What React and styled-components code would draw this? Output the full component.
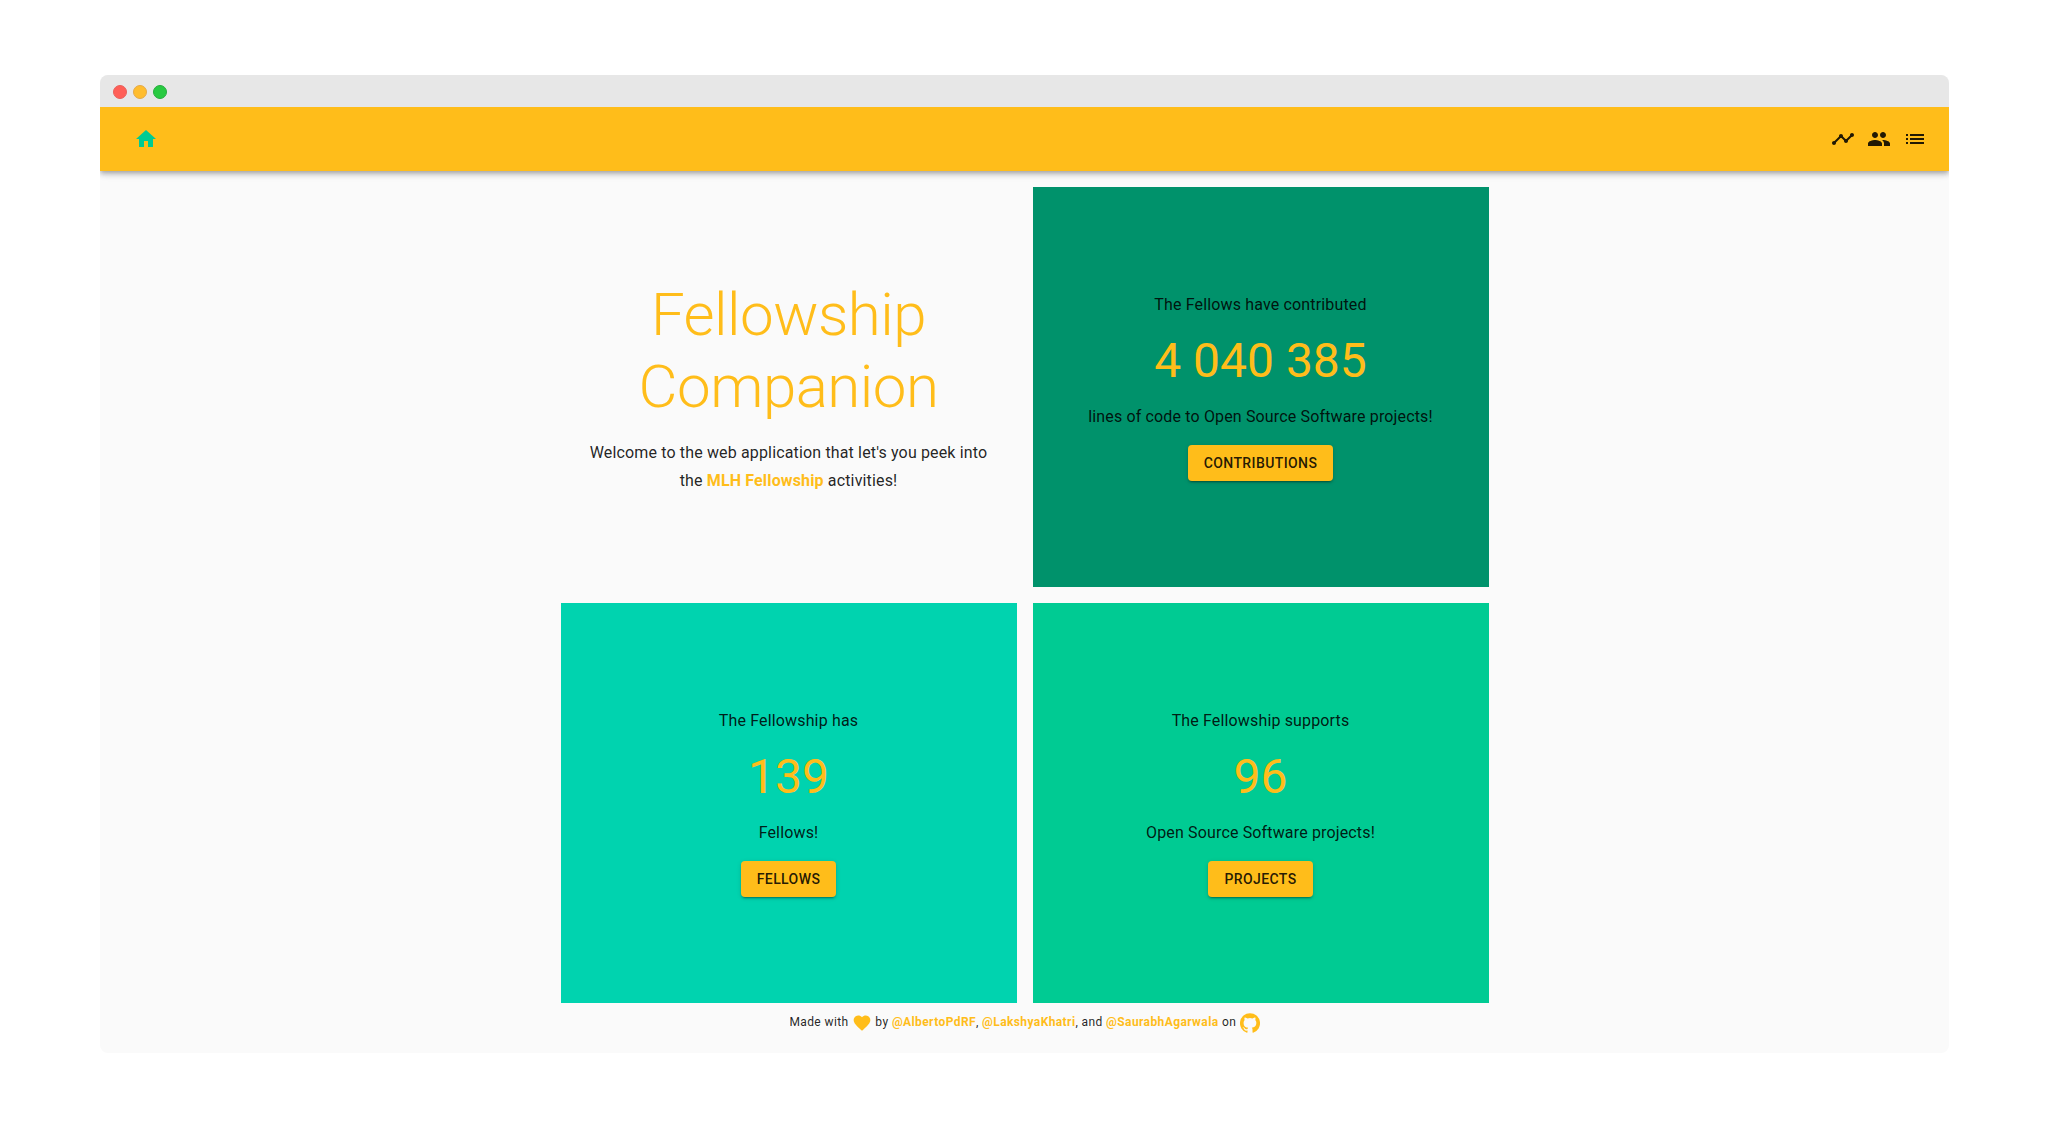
import React from "react";
import styled, { createGlobalStyle, ThemeProvider } from "styled-components";

const theme = {
  yellow: "#ffbd1a",
  green: "#00cb93",
  darkGreen: "#00926b",
  teal: "#00d3af",
  text: "rgba(0, 0, 0, 0.87)",
  surface: "#fafafa",
};

const GlobalStyle = createGlobalStyle`
  *, *::before, *::after {
    box-sizing: border-box;
  }
  body {
    margin: 0;
    background: #fff;
    color: ${theme.text};
    font-family: Roboto, "Liberation Sans", sans-serif;
  }
`;

const Page = styled.div`
  padding: 75px 100px;
`;

const BrowserWindow = styled.div`
  overflow: hidden;
  border-radius: 8px;
  background: ${({ theme }) => theme.surface};
`;

const TitleBar = styled.div`
  position: relative;
  z-index: 1;
  display: flex;
  align-items: center;
  gap: 6px;
  height: 32px;
  padding: 2px 13px 0;
  background: #e7e7e7;
`;

const WindowDot = styled.span`
  width: 14px;
  height: 14px;
  border: 1px solid ${({ $edge }) => $edge};
  border-radius: 50%;
  background: ${({ $fill }) => $fill};
`;

const AppBar = styled.header`
  display: flex;
  align-items: center;
  justify-content: space-between;
  height: 64px;
  padding: 0 16px 0 28px;
  background: ${({ theme }) => theme.yellow};
  box-shadow:
    0 2px 4px -1px rgba(0, 0, 0, 0.2),
    0 4px 5px 0 rgba(0, 0, 0, 0.14),
    0 1px 10px 0 rgba(0, 0, 0, 0.12);
`;

const Nav = styled.nav`
  display: flex;
`;

const NavLink = styled.a`
  display: flex;
  padding: 6px;
  color: ${({ $active, theme }) => ($active ? theme.green : theme.text)};
`;

const Icon = styled.svg.attrs({ viewBox: "0 0 24 24", "aria-hidden": true })`
  width: ${({ $size = 24 }) => $size}px;
  height: ${({ $size = 24 }) => $size}px;
  fill: currentColor;
`;

const Grid = styled.main`
  display: grid;
  grid-template-columns: repeat(2, minmax(0, 1fr));
  grid-auto-rows: 400px;
  gap: 16px;
  max-width: 960px;
  margin: 0 auto;
  padding: 16px 16px 0;
`;

const Panel = styled.section`
  display: flex;
  flex-direction: column;
  align-items: center;
  justify-content: center;
  gap: ${({ $gap = 14 }) => $gap}px;
  padding: ${({ $color }) => ($color ? "0 16px 2px" : "0 16px")};
  text-align: center;
  background: ${({ $color = "transparent" }) => $color};
`;

const Title = styled.h1`
  margin: 0;
  color: ${({ theme }) => theme.yellow};
  font-size: 60px;
  font-weight: 300;
  line-height: 72px;
  letter-spacing: -0.00833em;
`;

const Text = styled.p`
  margin: 0;
  font-size: 16px;
  line-height: 28px;
  letter-spacing: 0.00938em;
`;

const Count = styled.strong`
  color: ${({ theme }) => theme.yellow};
  font-size: 48px;
  font-weight: 400;
  line-height: 56px;
`;

const Button = styled.button`
  height: 36px;
  padding: 0 16px;
  border: 0;
  border-radius: 4px;
  background: ${({ theme }) => theme.yellow};
  color: ${({ theme }) => theme.text};
  font: 500 14px/24px Roboto, "Liberation Sans", sans-serif;
  letter-spacing: 0.02857em;
  text-transform: uppercase;
  cursor: pointer;
  box-shadow:
    0 3px 1px -2px rgba(0, 0, 0, 0.2),
    0 2px 2px 0 rgba(0, 0, 0, 0.14),
    0 1px 5px 0 rgba(0, 0, 0, 0.12);
`;

const Link = styled.a`
  color: ${({ theme }) => theme.yellow};
  font-weight: 700;
  text-decoration: none;
`;

const Footer = styled.footer`
  height: 50px;
  padding-top: 9px;
  text-align: center;
  font-size: 12px;
  line-height: 20px;
  letter-spacing: 0.03333em;

  svg {
    color: ${({ theme }) => theme.yellow};
    vertical-align: middle;
  }
`;

const paths = {
  home: "M10 20v-6h4v6h5v-8h3L12 3 2 12h3v8z",
  timeline:
    "M23 8c0 1.1-.9 2-2 2-.18 0-.35-.02-.51-.07l-3.56 3.55c.05.16.07.34.07.52 0 1.1-.9 2-2 2s-2-.9-2-2c0-.18.02-.36.07-.52l-2.55-2.55c-.16.05-.34.07-.52.07s-.36-.02-.52-.07l-4.55 4.56c.05.16.07.33.07.51 0 1.1-.9 2-2 2s-2-.9-2-2 .9-2 2-2c.18 0 .35.02.51.07l4.56-4.55C8.02 9.36 8 9.18 8 9c0-1.1.9-2 2-2s2 .9 2 2c0 .18-.02.36-.07.52l2.55 2.55c.16-.05.34-.07.52-.07s.36.02.52.07l3.55-3.56C19.02 8.35 19 8.18 19 8c0-1.1.9-2 2-2s2 .9 2 2z",
  people:
    "M16 11c1.66 0 2.99-1.34 2.99-3S17.66 5 16 5c-1.66 0-3 1.34-3 3s1.34 3 3 3zm-8 0c1.66 0 2.99-1.34 2.99-3S9.66 5 8 5C6.34 5 5 6.34 5 8s1.34 3 3 3zm0 2c-2.33 0-7 1.17-7 3.5V19h14v-2.5c0-2.33-4.67-3.5-7-3.5zm8 0c-.29 0-.62.02-.97.05 1.16.84 1.97 1.97 1.97 3.45V19h6v-2.5c0-2.33-4.67-3.5-7-3.5z",
  list: "M3 13h2v-2H3v2zm0 4h2v-2H3v2zm0-8h2V7H3v2zm4 4h14v-2H7v2zm0 4h14v-2H7v2zM7 7v2h14V7H7z",
  heart:
    "M12 21.35l-1.45-1.32C5.4 15.36 2 12.28 2 8.5 2 5.42 4.42 3 7.5 3c1.74 0 3.41.81 4.5 2.09C13.09 3.81 14.76 3 16.5 3 19.58 3 22 5.42 22 8.5c0 3.78-3.4 6.86-8.55 11.54L12 21.35z",
  github:
    "M12 .3a12 12 0 0 0-3.8 23.4c.6.1.8-.3.8-.6v-2c-3.3.7-4-1.6-4-1.6-.6-1.4-1.4-1.8-1.4-1.8-1-.7.1-.7.1-.7 1.2 0 1.9 1.2 1.9 1.2 1 1.8 2.8 1.3 3.5 1 0-.8.4-1.3.7-1.6-2.7-.3-5.5-1.3-5.5-6 0-1.2.5-2.3 1.3-3.1-.2-.4-.6-1.6 0-3.2 0 0 1-.3 3.4 1.2a11.5 11.5 0 0 1 6 0c2.3-1.5 3.3-1.2 3.3-1.2.6 1.6.2 2.8 0 3.2.9.8 1.3 1.9 1.3 3.2 0 4.6-2.8 5.6-5.5 5.9.5.4.9 1 .9 2.2v3.3c0 .3.1.7.8.6A12 12 0 0 0 12 .3",
};

const windowDots = [
  { fill: "#ff5f57", edge: "#e9605a" },
  { fill: "#ffbd2e", edge: "#e5a946" },
  { fill: "#28ca41", edge: "#26ac3d" },
];

const navItems = [
  { label: "Contributions", icon: "timeline" },
  { label: "Fellows", icon: "people" },
  { label: "Projects", icon: "list" },
];

const stats = [
  {
    before: "The Fellows have contributed",
    count: "4 040 385",
    after: "lines of code to Open Source Software projects!",
    action: "Contributions",
    color: theme.darkGreen,
  },
  {
    before: "The Fellowship has",
    count: "139",
    after: "Fellows!",
    action: "Fellows",
    color: theme.teal,
  },
  {
    before: "The Fellowship supports",
    count: "96",
    after: "Open Source Software projects!",
    action: "Projects",
    color: theme.green,
  },
];

function Glyph({ name, size }) {
  return (
    <Icon $size={size}>
      <path d={paths[name]} />
    </Icon>
  );
}

export default function App() {
  return (
    <ThemeProvider theme={theme}>
      <GlobalStyle />
      <Page>
        <BrowserWindow>
          <TitleBar>
            {windowDots.map((dot) => (
              <WindowDot key={dot.fill} $fill={dot.fill} $edge={dot.edge} />
            ))}
          </TitleBar>
          <AppBar>
            <NavLink href="#home" aria-label="Home" $active>
              <Glyph name="home" />
            </NavLink>
            <Nav>
              {navItems.map((item) => (
                <NavLink key={item.icon} href={`#${item.icon}`} aria-label={item.label}>
                  <Glyph name={item.icon} />
                </NavLink>
              ))}
            </Nav>
          </AppBar>
          <Grid>
            <Panel $gap={16}>
              <Title>Fellowship Companion</Title>
              <Text>
                Welcome to the web application that let's you peek into the{" "}
                <Link href="#fellowship">MLH Fellowship</Link> activities!
              </Text>
            </Panel>
            {stats.map((stat) => (
              <Panel key={stat.action} $color={stat.color}>
                <Text>{stat.before}</Text>
                <Count>{stat.count}</Count>
                <Text>{stat.after}</Text>
                <Button type="button">{stat.action}</Button>
              </Panel>
            ))}
          </Grid>
          <Footer>
            Made with <Glyph name="heart" size={20} /> by{" "}
            <Link href="#alberto">@AlbertoPdRF</Link>,{" "}
            <Link href="#lakshya">@LakshyaKhatri</Link>, and{" "}
            <Link href="#saurabh">@SaurabhAgarwala</Link> on{" "}
            <Link href="#github" aria-label="GitHub">
              <Glyph name="github" size={20} />
            </Link>
          </Footer>
        </BrowserWindow>
      </Page>
    </ThemeProvider>
  );
}
